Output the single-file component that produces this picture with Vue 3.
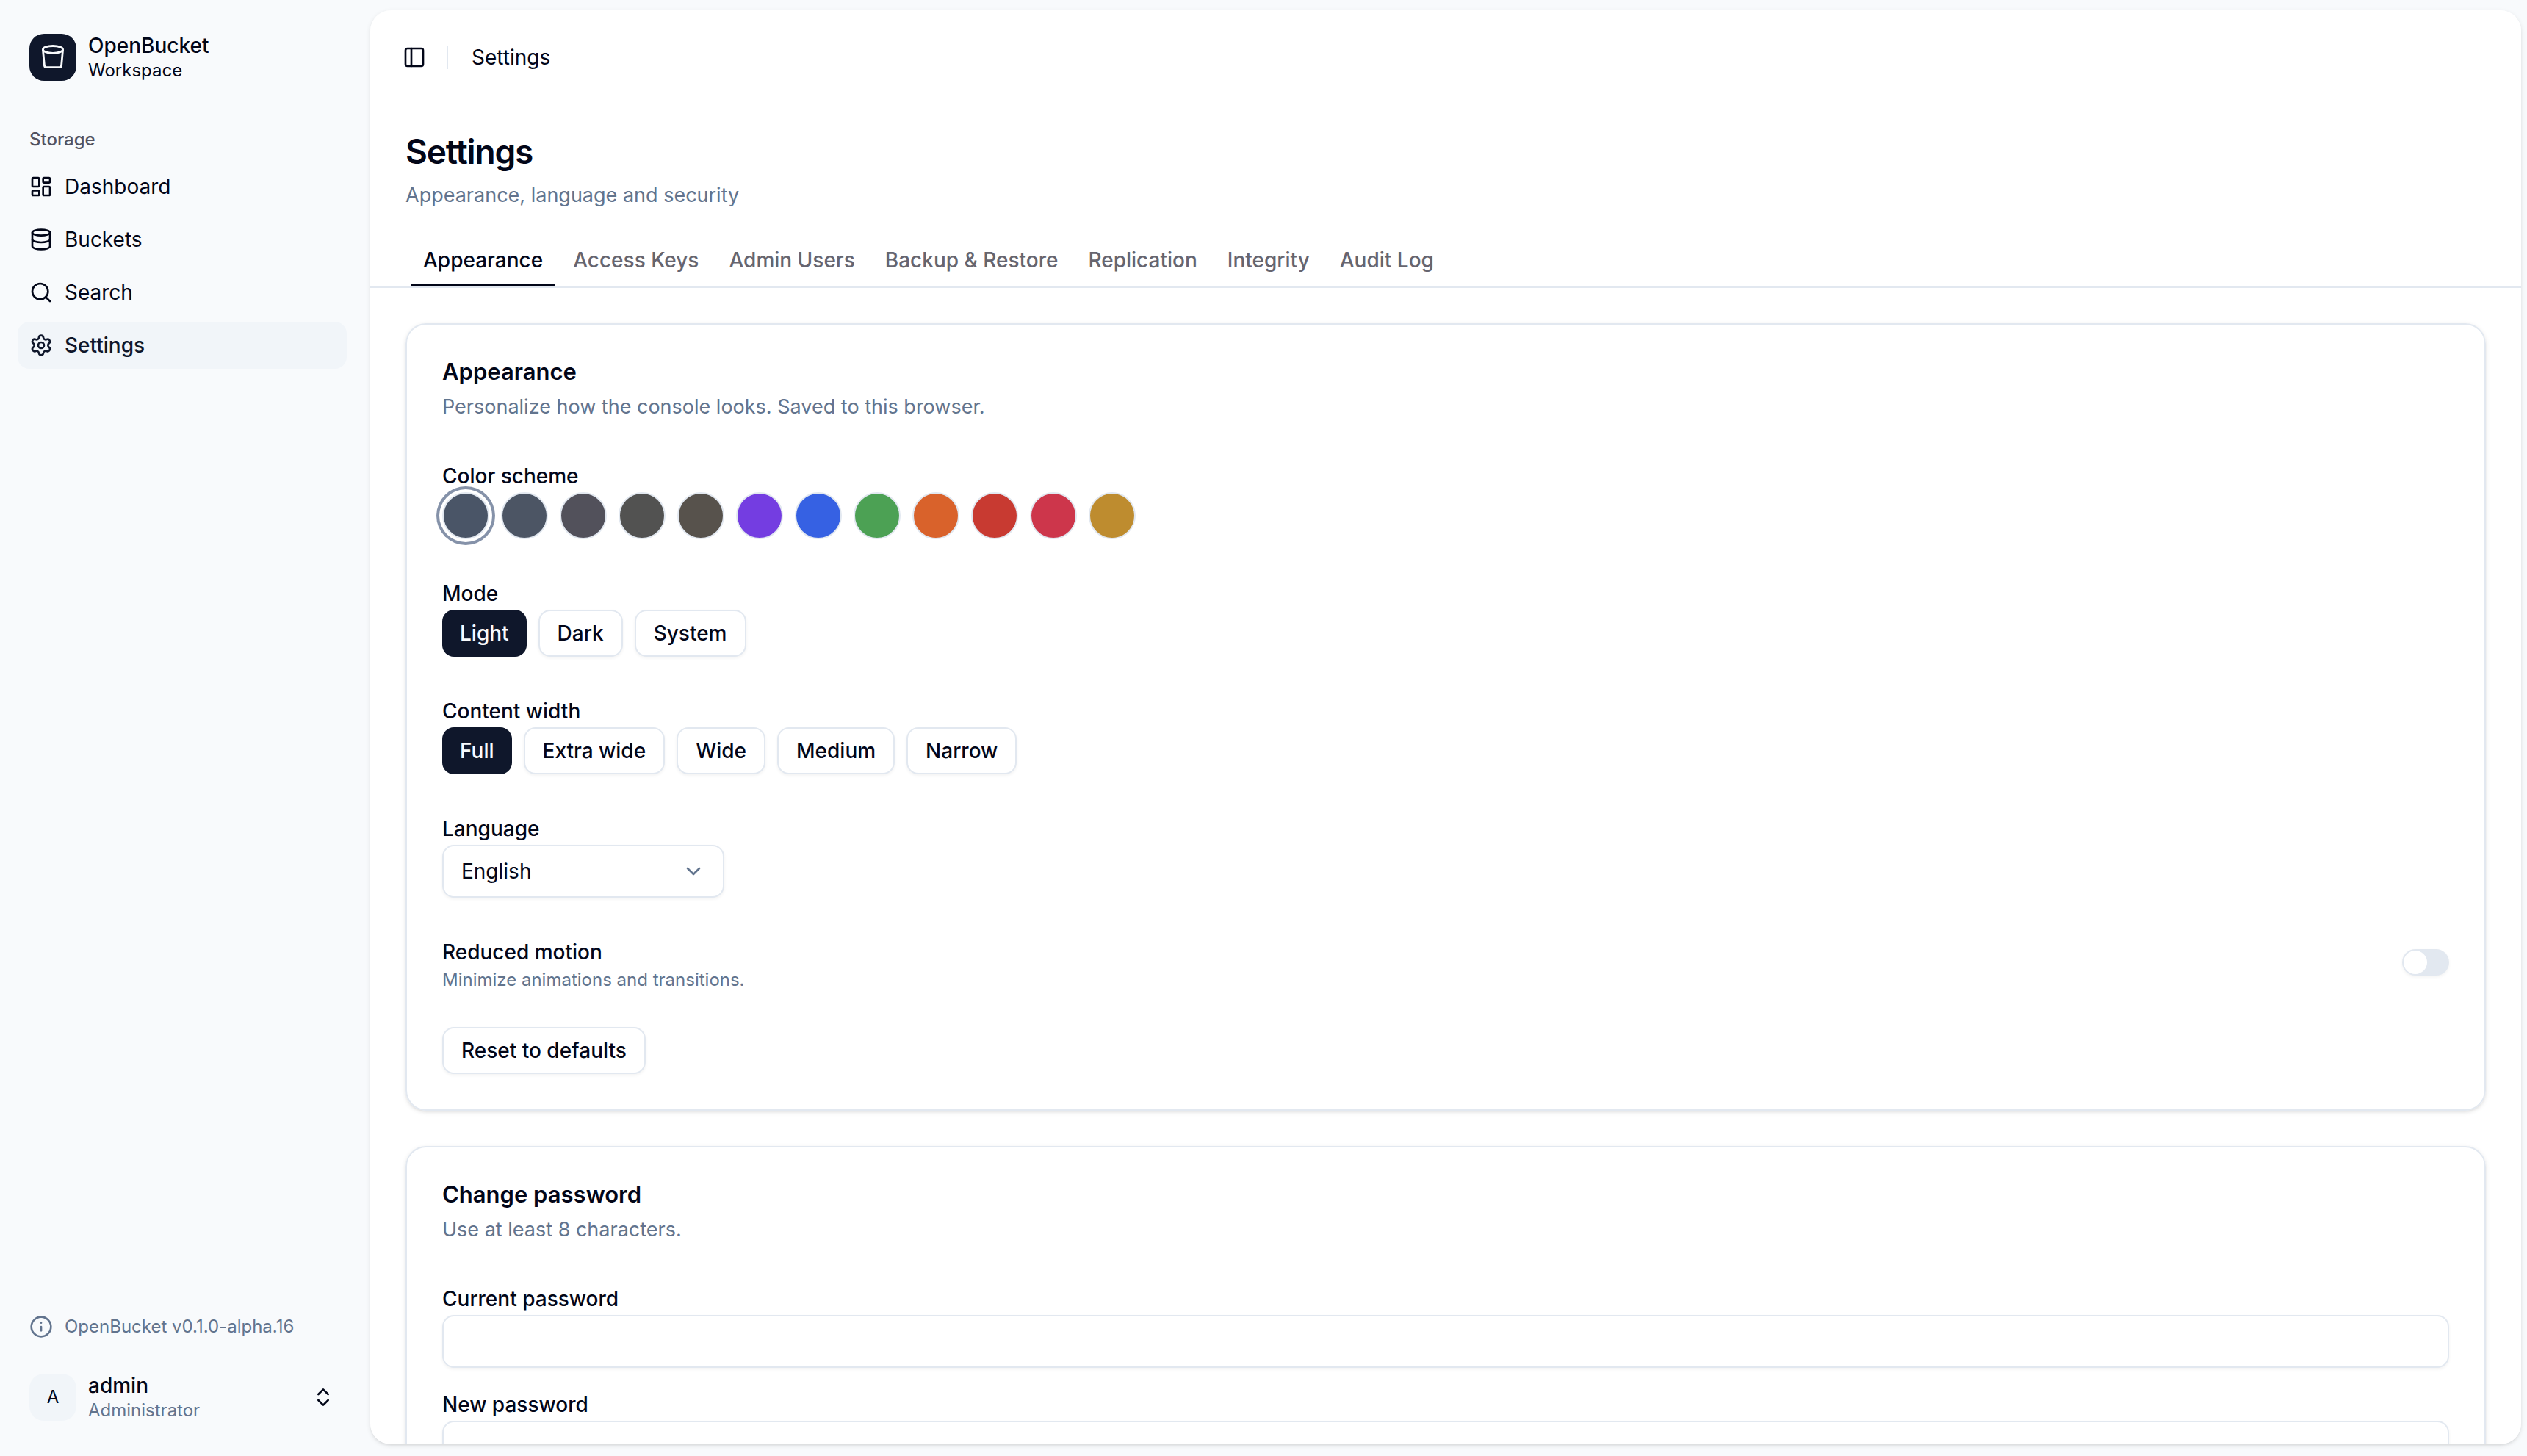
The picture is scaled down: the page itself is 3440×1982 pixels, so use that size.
<script setup>
import { ref } from 'vue'

const nav = [
  { label: 'Dashboard', icon: 'dashboard' },
  { label: 'Buckets', icon: 'database' },
  { label: 'Search', icon: 'search' },
  { label: 'Settings', icon: 'settings', active: true },
]

const tabs = ['Appearance', 'Access Keys', 'Admin Users', 'Backup & Restore', 'Replication', 'Integrity', 'Audit Log']
const activeTab = ref('Appearance')

const schemes = ['#4a5567', '#4c5564', '#52515b', '#525251', '#57524c', '#743de1', '#3661e3', '#4ca154', '#d9622b', '#c83a31', '#cd364b', '#be8c2f']
const scheme = ref(0)

const modes = ['Light', 'Dark', 'System']
const mode = ref('Light')

const widths = ['Full', 'Extra wide', 'Wide', 'Medium', 'Narrow']
const width = ref('Full')

const language = ref('English')
const reduced = ref(false)
</script>

<template>
  <div class="shell">
    <aside class="sidebar">
      <div class="brand">
        <svg class="logo" viewBox="0 0 64 64" aria-hidden="true">
          <rect width="64" height="64" rx="20" fill="#0f172b" />
          <g fill="none" stroke="#f8fafc" stroke-width="2.8" stroke-linejoin="round">
            <ellipse cx="32" cy="21.4" rx="13.6" ry="4.9" />
            <path d="M18.4 21.4 20.4 43a3 3 0 0 0 3 2.7h17.2a3 3 0 0 0 3-2.7l2-21.6" />
          </g>
        </svg>
        <div class="lines">
          <span class="name">OpenBucket</span>
          <span class="small">Workspace</span>
        </div>
      </div>

      <nav class="nav" aria-labelledby="nav-title">
        <div id="nav-title" class="nav-title">Storage</div>
        <a v-for="item in nav" :key="item.label" href="#" class="nav-item" :class="{ active: item.active }">
          <svg class="icon" viewBox="0 0 24 24" aria-hidden="true">
            <template v-if="item.icon === 'dashboard'">
              <rect width="7" height="9" x="3" y="3" rx="1" />
              <rect width="7" height="5" x="14" y="3" rx="1" />
              <rect width="7" height="9" x="14" y="12" rx="1" />
              <rect width="7" height="5" x="3" y="16" rx="1" />
            </template>
            <template v-else-if="item.icon === 'database'">
              <ellipse cx="12" cy="5" rx="9" ry="3" />
              <path d="M3 5V19A9 3 0 0 0 21 19V5" />
              <path d="M3 12A9 3 0 0 0 21 12" />
            </template>
            <template v-else-if="item.icon === 'search'">
              <path d="m21 21-4.34-4.34" />
              <circle cx="11" cy="11" r="8" />
            </template>
            <template v-else>
              <path d="M9.671 4.136a2.34 2.34 0 0 1 4.659 0 2.34 2.34 0 0 0 3.319 1.915 2.34 2.34 0 0 1 2.33 4.033 2.34 2.34 0 0 0 0 3.831 2.34 2.34 0 0 1-2.33 4.033 2.34 2.34 0 0 0-3.319 1.915 2.34 2.34 0 0 1-4.659 0 2.34 2.34 0 0 0-3.32-1.915 2.34 2.34 0 0 1-2.33-4.033 2.34 2.34 0 0 0 0-3.831A2.34 2.34 0 0 1 6.35 6.051a2.34 2.34 0 0 0 3.319-1.915" />
              <circle cx="12" cy="12" r="3" />
            </template>
          </svg>
          {{ item.label }}
        </a>
      </nav>

      <footer class="side-footer">
        <div class="version">
          <svg class="icon" viewBox="0 0 24 24" aria-hidden="true">
            <circle cx="12" cy="12" r="10" />
            <path d="M12 16v-4" />
            <path d="M12 8h.01" />
          </svg>
          OpenBucket v0.1.0-alpha.16
        </div>
        <button type="button" class="user">
          <span class="avatar">A</span>
          <span class="lines">
            <span class="name">admin</span>
            <span class="small muted">Administrator</span>
          </span>
          <svg class="icon" viewBox="0 0 24 24" aria-hidden="true">
            <path d="m7 15 5 5 5-5" />
            <path d="m7 9 5-5 5 5" />
          </svg>
        </button>
      </footer>
    </aside>

    <main class="panel">
      <header class="topbar">
        <button type="button" class="toggle" aria-label="Toggle sidebar">
          <svg class="icon" viewBox="0 0 24 24" aria-hidden="true">
            <rect width="18" height="18" x="3" y="3" rx="2" />
            <path d="M9 3v18" />
          </svg>
        </button>
        <span class="divider"></span>
        <span>Settings</span>
      </header>

      <div class="heading">
        <h1>Settings</h1>
        <p class="description">Appearance, language and security</p>
      </div>

      <div class="tabs" role="tablist">
        <button
          v-for="tab in tabs"
          :key="tab"
          type="button"
          role="tab"
          class="tab"
          :class="{ active: tab === activeTab }"
          :aria-selected="tab === activeTab"
          @click="activeTab = tab"
        >{{ tab }}</button>
      </div>

      <div class="cards">
        <section class="card">
          <div class="card-head">
            <h2>Appearance</h2>
            <p class="description">Personalize how the console looks. Saved to this browser.</p>
          </div>

          <div role="group" aria-labelledby="scheme-label">
            <div id="scheme-label" class="label">Color scheme</div>
            <div class="row">
              <button
                v-for="(color, i) in schemes"
                :key="color"
                type="button"
                class="swatch"
                :class="{ active: i === scheme }"
                :style="{ backgroundColor: color }"
                :aria-label="color"
                @click="scheme = i"
              ></button>
            </div>
          </div>

          <div role="group" aria-labelledby="mode-label">
            <div id="mode-label" class="label">Mode</div>
            <div class="row">
              <button v-for="m in modes" :key="m" type="button" class="btn" :class="{ primary: m === mode }" @click="mode = m">{{ m }}</button>
            </div>
          </div>

          <div role="group" aria-labelledby="width-label">
            <div id="width-label" class="label">Content width</div>
            <div class="row">
              <button v-for="w in widths" :key="w" type="button" class="btn" :class="{ primary: w === width }" @click="width = w">{{ w }}</button>
            </div>
          </div>

          <div>
            <label class="label" for="language">Language</label>
            <div class="select">
              <select id="language" v-model="language">
                <option>English</option>
              </select>
              <svg class="icon" viewBox="0 0 24 24" aria-hidden="true"><path d="m6 9 6 6 6-6" /></svg>
            </div>
          </div>

          <div class="switch-row">
            <div>
              <label class="label" for="motion">Reduced motion</label>
              <p id="motion-help" class="small muted">Minimize animations and transitions.</p>
            </div>
            <input id="motion" v-model="reduced" type="checkbox" role="switch" class="switch" aria-describedby="motion-help" />
          </div>

          <div class="row">
            <button type="button" class="btn">Reset to defaults</button>
          </div>
        </section>

        <section class="card">
          <div class="card-head">
            <h2>Change password</h2>
            <p class="description">Use at least 8 characters.</p>
          </div>
          <form class="form" @submit.prevent>
            <div>
              <label class="label" for="current">Current password</label>
              <input id="current" type="password" class="input" autocomplete="current-password" />
            </div>
            <div>
              <label class="label" for="new">New password</label>
              <input id="new" type="password" class="input" autocomplete="new-password" />
            </div>
          </form>
        </section>
      </div>
    </main>
  </div>
</template>

<style>
body {
  margin: 0;
  background: #f8fafc;
}
</style>

<style scoped>
* {
  box-sizing: border-box;
}

.shell {
  display: flex;
  height: 100vh;
  background: #f8fafc;
  color: #020618;
  font-family: Inter, "Liberation Sans", sans-serif;
  font-size: 28px;
  line-height: 40px;
}

button,
input,
select {
  margin: 0;
  font: inherit;
  color: inherit;
}

h1,
h2,
p {
  margin: 0;
}

.icon {
  flex: none;
  width: 32px;
  height: 32px;
  fill: none;
  stroke: currentColor;
  stroke-width: 2;
  stroke-linecap: round;
  stroke-linejoin: round;
}

.muted {
  color: #62748e;
}

.small {
  font-size: 24px;
  line-height: 32px;
}

.description {
  color: #62748e;
  font-size: 27px;
}

/* Sidebar */
.sidebar {
  display: flex;
  flex: none;
  flex-direction: column;
  width: 504px;
  padding: 30px 32px 32px 24px;
}

.brand,
.user {
  display: flex;
  align-items: center;
  gap: 16px;
  height: 96px;
  padding: 0 16px;
}

.logo {
  flex: none;
  width: 64px;
  height: 64px;
}

.lines {
  display: flex;
  flex: 1;
  flex-direction: column;
  text-align: left;
}

.name {
  font-weight: 500;
  line-height: 36px;
}

.nav {
  display: flex;
  flex-direction: column;
  gap: 8px;
  margin-top: 32px;
}

.nav-title {
  margin-bottom: -8px;
  padding: 0 16px;
  color: #53525f;
  font-size: 24px;
  font-weight: 500;
  line-height: 64px;
}

.nav-item {
  display: flex;
  align-items: center;
  gap: 16px;
  height: 64px;
  padding: 0 16px;
  border-radius: 16px;
  color: inherit;
  text-decoration: none;
}

.nav-item.active {
  background: #f1f5f9;
  color: #0f172b;
  font-weight: 500;
}

.side-footer {
  display: flex;
  flex-direction: column;
  gap: 16px;
  margin-top: auto;
}

.version {
  display: flex;
  align-items: center;
  gap: 16px;
  height: 64px;
  padding: 0 16px;
  color: #62748e;
  font-size: 24px;
}

.user {
  border: 0;
  background: none;
}

.avatar {
  width: 64px;
  border-radius: 20px;
  background: #f1f5f9;
  font-size: 24px;
  line-height: 64px;
  text-align: center;
}

/* Main panel */
.panel {
  flex: 1;
  min-width: 0;
  margin: 14px 8px 16px 0;
  overflow-y: auto;
  scrollbar-width: none;
  border-radius: 28px;
  background: #fff;
  box-shadow: 0 2px 6px rgb(0 0 0 / 10%), 0 2px 4px -2px rgb(0 0 0 / 10%);
}

.topbar {
  display: flex;
  align-items: center;
  height: 128px;
  padding: 0 44px;
}

.toggle {
  display: flex;
  padding: 0;
  border: 0;
  background: none;
}

.divider {
  width: 2px;
  height: 32px;
  margin: 0 32px 0 28px;
  background: #e2e8f0;
}

.heading {
  padding: 32px 48px;
}

h1 {
  margin-bottom: 8px;
  font-size: 46px;
  font-weight: 600;
  line-height: 64px;
  letter-spacing: -0.025em;
}

.tabs {
  display: flex;
  gap: 9px;
  padding: 0 56px;
  border-bottom: 2px solid #e2e8f0;
}

.tab {
  height: 72px;
  padding: 0 16px;
  border: 0;
  background: none;
  color: #66656f;
  font-weight: 500;
}

.tab.active {
  color: #020618;
  box-shadow: inset 0 -3px #020618;
}

.cards {
  display: flex;
  flex-direction: column;
  gap: 48px;
  padding: 48px;
}

.card {
  display: flex;
  flex-direction: column;
  gap: 48px;
  padding: 48px;
  border: 2px solid #e2e8f0;
  border-radius: 28px;
  box-shadow: 0 2px 6px rgb(0 0 0 / 10%), 0 2px 4px -2px rgb(0 0 0 / 10%);
}

.card-head {
  display: flex;
  flex-direction: column;
  gap: 12px;
}

h2 {
  font-size: 31px;
  font-weight: 600;
  line-height: 32px;
}

.label {
  display: block;
  padding-top: 4px;
  font-weight: 500;
  line-height: 44px;
}

.row {
  display: flex;
  gap: 16px;
}

.swatch {
  width: 64px;
  height: 64px;
  padding: 0;
  border: 2px solid #e2e8f0;
  border-radius: 50%;
}

.swatch.active {
  box-shadow: 0 0 0 4px #fff, 0 0 0 8px #8592a9;
}

.btn {
  height: 64px;
  padding: 0 24px;
  border: 2px solid #e2e8f0;
  border-radius: 16px;
  background: #fff;
  box-shadow: 0 2px 4px rgb(0 0 0 / 5%);
  font-weight: 500;
}

.btn.primary {
  border: 0;
  background: #0f172b;
  color: #f8fafc;
  box-shadow: none;
}

.select {
  display: grid;
  align-items: center;
  width: 384px;
}

.select > * {
  grid-area: 1 / 1;
}

.select .icon {
  justify-self: end;
  margin-right: 26px;
  color: #62748e;
  pointer-events: none;
}

select,
.input {
  width: 100%;
  height: 72px;
  padding: 0 24px;
  border: 2px solid #e2e8f0;
  border-radius: 16px;
  background: #fff;
  box-shadow: 0 2px 4px rgb(0 0 0 / 5%);
  appearance: none;
}

.input {
  display: block;
}

.switch-row {
  display: flex;
  align-items: center;
  justify-content: space-between;
}

.switch {
  display: flex;
  width: 64px;
  height: 36px;
  padding: 2px;
  border-radius: 18px;
  background: #e2e8f0;
  box-shadow: 0 2px 4px rgb(0 0 0 / 5%);
  appearance: none;
}

.switch::before {
  width: 32px;
  height: 32px;
  border-radius: 50%;
  background: #fff;
  content: "";
}

.switch:checked {
  justify-content: flex-end;
  background: #0f172b;
}

.form {
  display: flex;
  flex-direction: column;
  gap: 24px;
}
</style>
